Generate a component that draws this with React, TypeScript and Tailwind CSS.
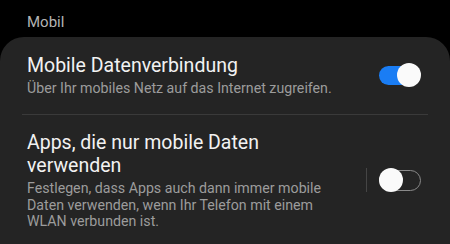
import { useState } from 'react'

function Toggle({ on }: { on: boolean }) {
  if (on) {
    return (
      <div className="relative h-6 w-[42px] shrink-0">
        <div className="absolute left-0 top-[2.5px] h-[19px] w-[38px] rounded-full bg-[#1a7df4]" />
        <div className="absolute right-0 top-0 size-6 rounded-full bg-[#fafafa]" />
      </div>
    )
  }
  return (
    <div className="relative h-6 w-[42px] shrink-0">
      <div className="absolute left-0 top-[1.5px] h-[21px] w-[42px] rounded-full border-[1.5px] border-[#8a8a8a]" />
      <div className="absolute left-0 top-0 size-6 rounded-full bg-[#fafafa]" />
    </div>
  )
}

function SettingRow({
  title,
  desc,
  on,
  divider,
}: {
  title: string
  desc: string
  on: boolean
  divider: boolean
}) {
  return (
    <div className="flex items-center pl-[27px] pr-[29px]">
      <div className="flex-1 min-w-0 pr-6">
        <div className="text-[19.5px] leading-[23px] text-[#f2f2f2]">{title}</div>
        <div className="mt-[3px] text-[14.2px] leading-[16.5px] text-[#9c9c9c]">{desc}</div>
      </div>
      <div className={`mr-3 h-6 w-px ${divider ? 'bg-[#454545]' : 'bg-transparent'}`} />
      <Toggle on={on} />
    </div>
  )
}

export default function App() {
  const [items] = useState([
    {
      title: 'Mobile Datenverbindung',
      desc: 'Über Ihr mobiles Netz auf das Internet zugreifen.',
      on: true,
      divider: false,
    },
    {
      title: 'Apps, die nur mobile Daten verwenden',
      desc: 'Festlegen, dass Apps auch dann immer mobile Daten verwenden, wenn Ihr Telefon mit einem WLAN verbunden ist.',
      on: false,
      divider: true,
    },
  ])

  return (
    <div className="h-[244px] w-[450px] overflow-hidden bg-black font-['Roboto',sans-serif]">
      <div className="pl-[27px] pt-3 text-[15px] leading-5 text-[#b4b4b4]">Mobil</div>
      <div className="mt-[5px] h-[300px] rounded-[24px] bg-[#242424] pt-[17px]">
        <SettingRow {...items[0]} />
        <div className="mx-[22px] mt-[17.5px] h-px bg-[#3a3a3a]" />
        <div className="pt-4">
          <SettingRow {...items[1]} />
        </div>
      </div>
    </div>
  )
}
